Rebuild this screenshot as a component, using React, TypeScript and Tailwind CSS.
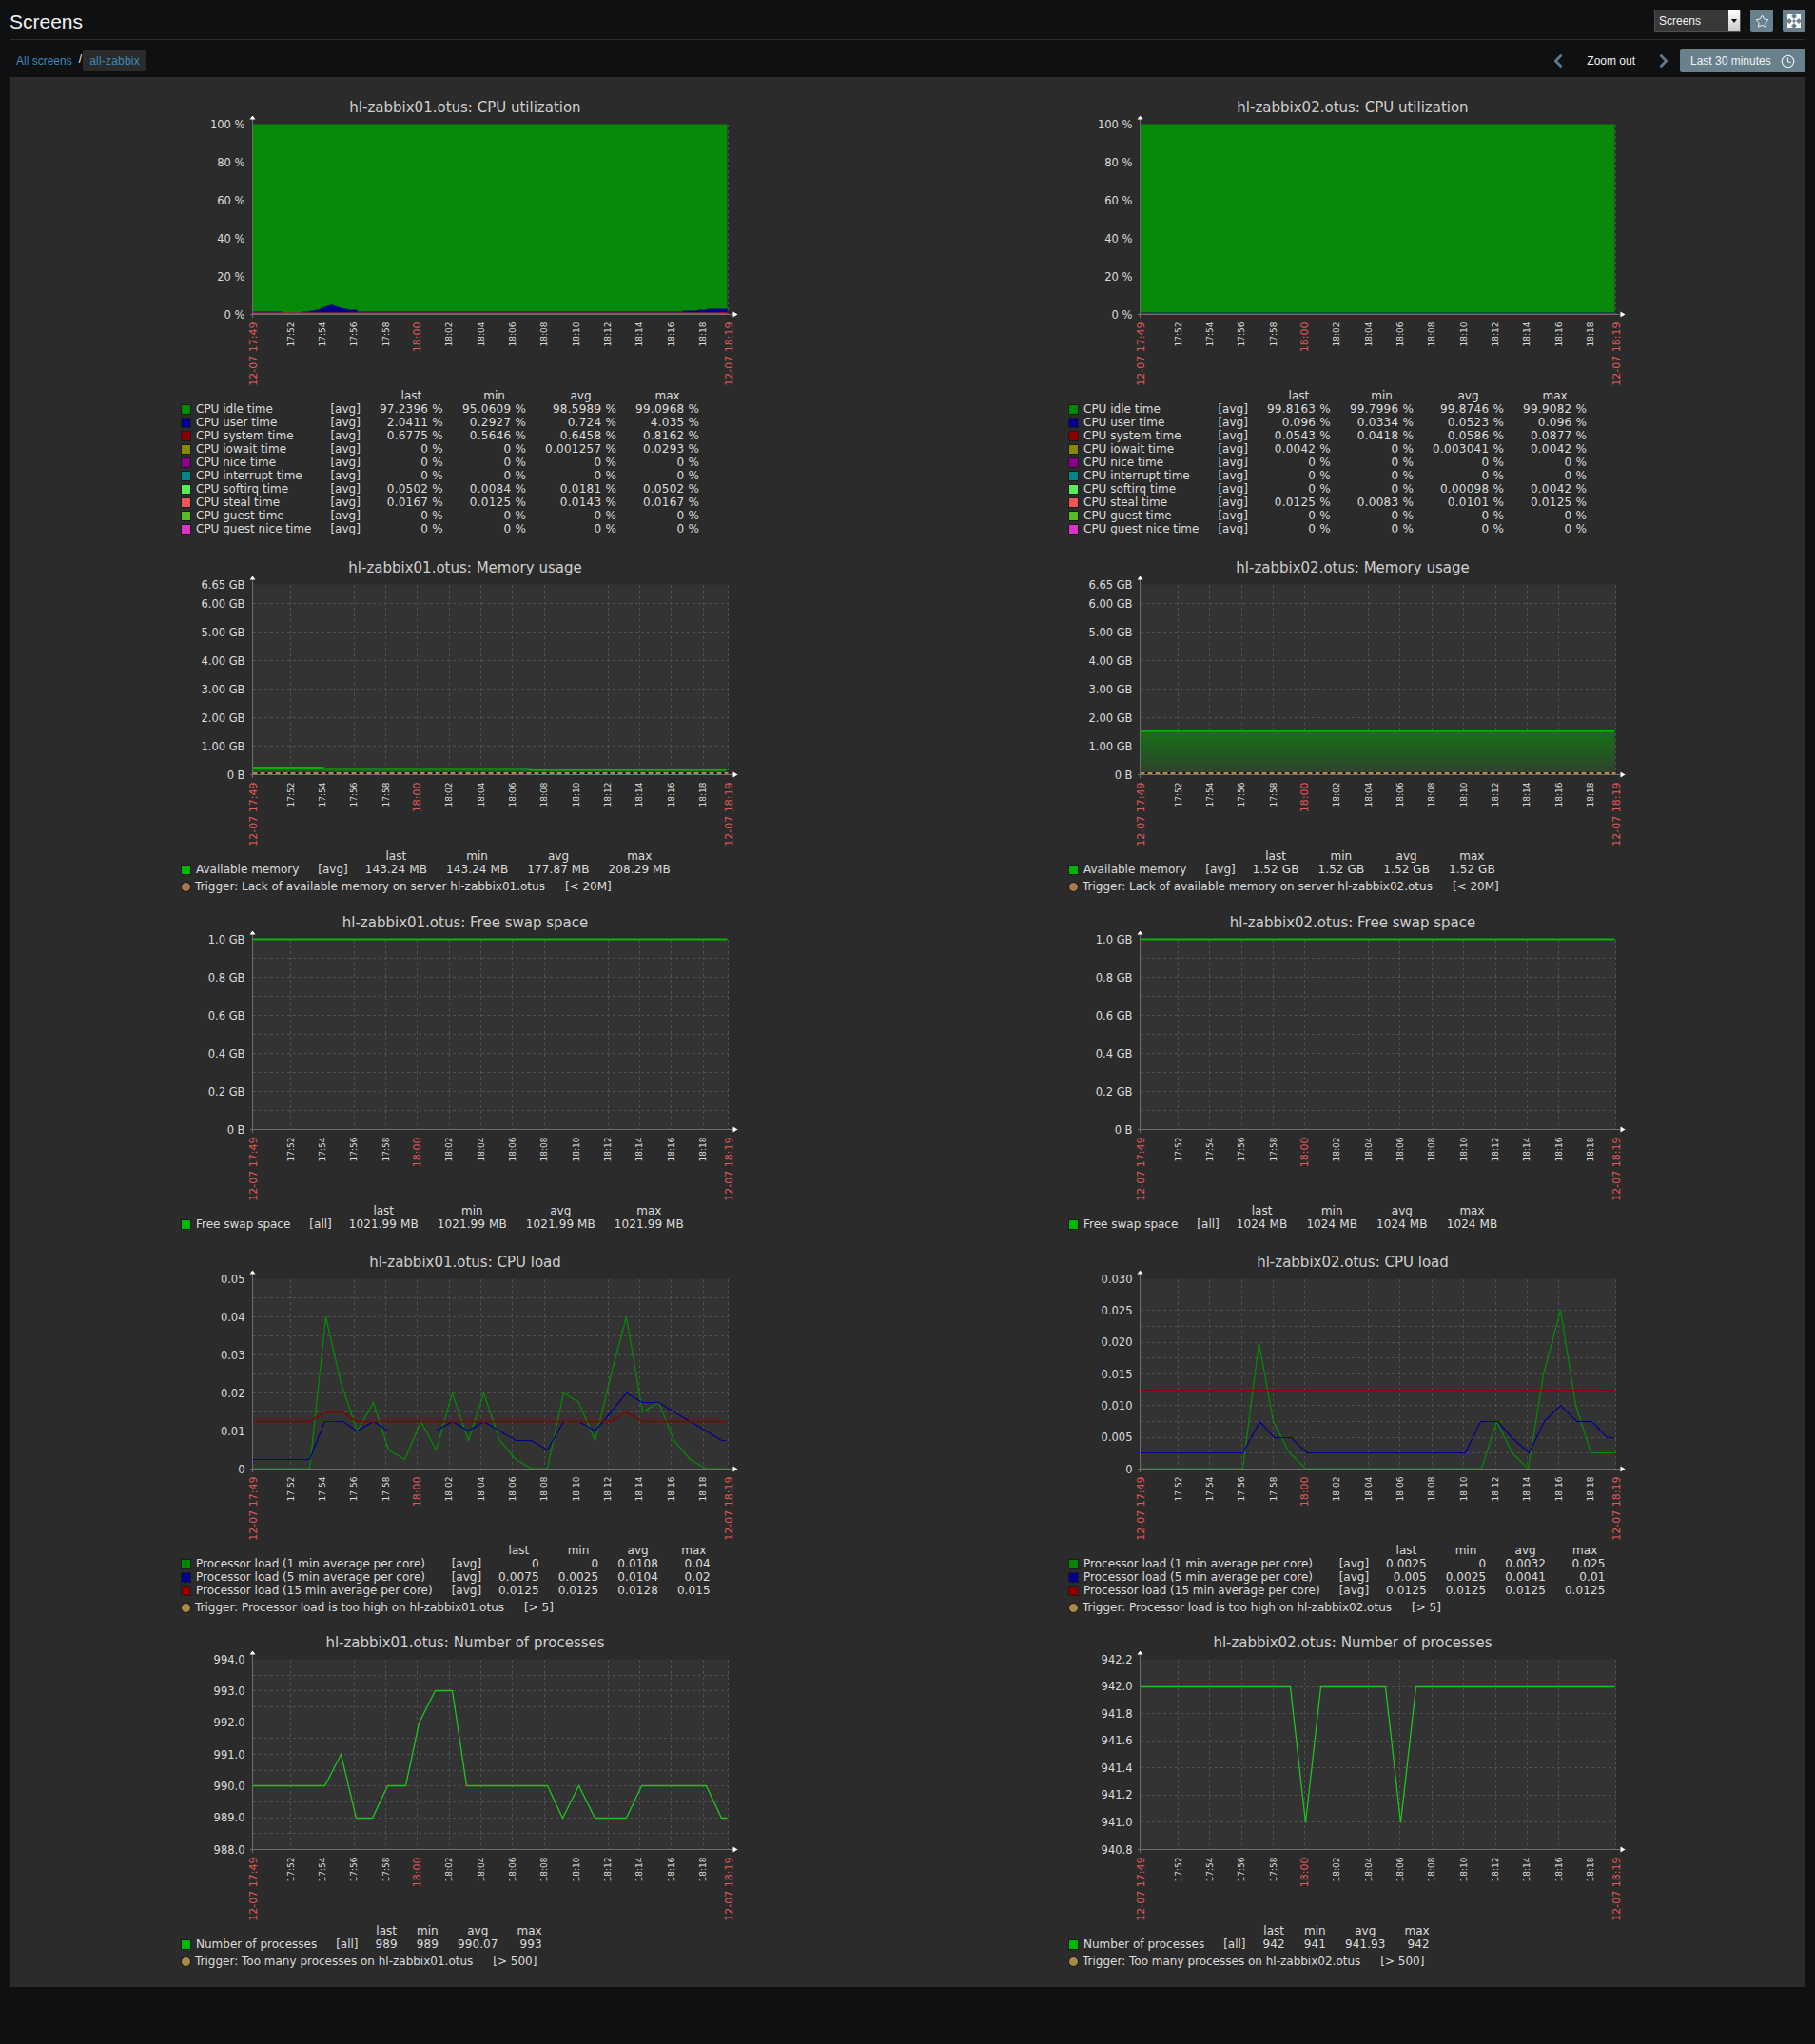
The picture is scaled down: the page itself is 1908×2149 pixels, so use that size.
import { ChevronLeft, ChevronRight, Clock, Star } from "lucide-react"

type Line = { points: string; color: string; width?: number }

type Row = { color: string; label: string; fn: string; values: string[] }

type Graph = {
  title: string
  yLabels: [string, number][]
  yGrid: number[]
  lines?: Line[]
  area?: string
  trigger?: boolean
  cpu?: "busy" | "idle"
  rows: Row[]
  triggerText?: [string, string, string]
}

const TICKS = ["17:52", "17:54", "17:56", "17:58", "18:00", "18:02", "18:04", "18:06", "18:08", "18:10", "18:12", "18:14", "18:16", "18:18"]

const tickX = (i: number) => 40 + i * 33.35

const every = (step: number, n: number) => Array.from({ length: n }, (_, i) => Math.round((i + 1) * step * 10) / 10)

const cpuRows = (rows: [string, string, string, string, string, string][]): Row[] =>
  rows.map(([color, label, a, b, c, d]) => ({ color, label, fn: "[avg]", values: [a, b, c, d] }))

const GREEN = "#00b800"

const pct = [
  ["100 %", 0],
  ["80 %", 40],
  ["60 %", 80],
  ["40 %", 120],
  ["20 %", 160],
  ["0 %", 200],
] as [string, number][]

const mem = [
  ["6.65 GB", 0],
  ["6.00 GB", 20],
  ["5.00 GB", 50],
  ["4.00 GB", 80],
  ["3.00 GB", 110],
  ["2.00 GB", 140],
  ["1.00 GB", 170],
  ["0 B", 200],
] as [string, number][]

const swap = [
  ["1.0 GB", 0],
  ["0.8 GB", 40],
  ["0.6 GB", 80],
  ["0.4 GB", 120],
  ["0.2 GB", 160],
  ["0 B", 200],
] as [string, number][]

const left: Graph[] = [
  {
    title: "hl-zabbix01.otus: CPU utilization",
    yLabels: pct,
    yGrid: [],
    cpu: "busy",
    rows: cpuRows([
      ["#008800", "CPU idle time", "97.2396 %", "95.0609 %", "98.5989 %", "99.0968 %"],
      ["#000088", "CPU user time", "2.0411 %", "0.2927 %", "0.724 %", "4.035 %"],
      ["#880000", "CPU system time", "0.6775 %", "0.5646 %", "0.6458 %", "0.8162 %"],
      ["#888800", "CPU iowait time", "0 %", "0 %", "0.001257 %", "0.0293 %"],
      ["#880088", "CPU nice time", "0 %", "0 %", "0 %", "0 %"],
      ["#008888", "CPU interrupt time", "0 %", "0 %", "0 %", "0 %"],
      ["#55ee55", "CPU softirq time", "0.0502 %", "0.0084 %", "0.0181 %", "0.0502 %"],
      ["#ee5555", "CPU steal time", "0.0167 %", "0.0125 %", "0.0143 %", "0.0167 %"],
      ["#55bb22", "CPU guest time", "0 %", "0 %", "0 %", "0 %"],
      ["#dd33cc", "CPU guest nice time", "0 %", "0 %", "0 %", "0 %"],
    ]),
  },
  {
    title: "hl-zabbix01.otus: Memory usage",
    yLabels: mem,
    yGrid: [20, 50, 80, 110, 140, 170],
    lines: [{ points: "0,192.5 74,192.5 74,194 292,194 292,195 498,195", color: GREEN, width: 2 }],
    area: "M0 193H74V194H292V195H498V199H0Z",
    trigger: true,
    rows: [{ color: GREEN, label: "Available memory", fn: "[avg]", values: ["143.24 MB", "143.24 MB", "177.87 MB", "208.29 MB"] }],
    triggerText: ["#a87850", "Trigger: Lack of available memory on server hl-zabbix01.otus", "[< 20M]"],
  },
  {
    title: "hl-zabbix01.otus: Free swap space",
    yLabels: swap,
    yGrid: every(20, 9),
    lines: [{ points: "0,0 499,0", color: GREEN, width: 2 }],
    rows: [{ color: GREEN, label: "Free swap space", fn: "[all]", values: ["1021.99 MB", "1021.99 MB", "1021.99 MB", "1021.99 MB"] }],
  },
  {
    title: "hl-zabbix01.otus: CPU load",
    yLabels: [
      ["0.05", 0],
      ["0.04", 40],
      ["0.03", 80],
      ["0.02", 120],
      ["0.01", 160],
      ["0", 200],
    ],
    yGrid: every(20, 9),
    lines: [
      {
        points:
          "0,199.5 60,199.5 77,40 93,110 110,160 127,130 143,180 160,190 177,150 193,180 210,120 227,170 243,120 260,170 277,190 293,199.5 310,199.5 327,120 343,130 360,170 377,100 393,40 410,140 427,130 443,170 460,190 477,199.5 498,199.5",
        color: "#008f00",
        width: 1.2,
      },
      {
        points:
          "0,190 60,190 76,150 95,150 110,160 127,150 143,160 193,160 210,150 227,160 243,150 260,160 277,170 293,170 310,180 327,150 343,150 360,160 377,140 393,120 410,130 427,130 443,140 477,160 493,170 498,170",
        color: "#000090",
        width: 1.2,
      },
      { points: "0,150 60,150 77,140 93,140 110,150 377,150 393,140 410,150 498,150", color: "#880000", width: 1.4 },
    ],
    rows: [
      { color: "#008800", label: "Processor load (1 min average per core)", fn: "[avg]", values: ["0", "0", "0.0108", "0.04"] },
      { color: "#000088", label: "Processor load (5 min average per core)", fn: "[avg]", values: ["0.0075", "0.0025", "0.0104", "0.02"] },
      { color: "#880000", label: "Processor load (15 min average per core)", fn: "[avg]", values: ["0.0125", "0.0125", "0.0128", "0.015"] },
    ],
    triggerText: ["#a88a48", "Trigger: Processor load is too high on hl-zabbix01.otus", "[> 5]"],
  },
  {
    title: "hl-zabbix01.otus: Number of processes",
    yLabels: [
      ["994.0", 0],
      ["993.0", 33.3],
      ["992.0", 66.7],
      ["991.0", 100],
      ["990.0", 133.3],
      ["989.0", 166.7],
      ["988.0", 200],
    ],
    yGrid: every(16.67, 11),
    lines: [
      {
        points: "0,133 76,133 93,100 109,167 126,167 142,133 161,133 175,67 192,33 210,33 225,133 310,133 326,167 343,133 360,167 393,167 409,133 477,133 493,167 499,167",
        color: "#1cc41c",
        width: 1.3,
      },
    ],
    rows: [{ color: GREEN, label: "Number of processes", fn: "[all]", values: ["989", "989", "990.07", "993"] }],
    triggerText: ["#a88a48", "Trigger: Too many processes on hl-zabbix01.otus", "[> 500]"],
  },
]

const right: Graph[] = [
  {
    title: "hl-zabbix02.otus: CPU utilization",
    yLabels: pct,
    yGrid: [],
    cpu: "idle",
    rows: cpuRows([
      ["#008800", "CPU idle time", "99.8163 %", "99.7996 %", "99.8746 %", "99.9082 %"],
      ["#000088", "CPU user time", "0.096 %", "0.0334 %", "0.0523 %", "0.096 %"],
      ["#880000", "CPU system time", "0.0543 %", "0.0418 %", "0.0586 %", "0.0877 %"],
      ["#888800", "CPU iowait time", "0.0042 %", "0 %", "0.003041 %", "0.0042 %"],
      ["#880088", "CPU nice time", "0 %", "0 %", "0 %", "0 %"],
      ["#008888", "CPU interrupt time", "0 %", "0 %", "0 %", "0 %"],
      ["#55ee55", "CPU softirq time", "0 %", "0 %", "0.00098 %", "0.0042 %"],
      ["#ee5555", "CPU steal time", "0.0125 %", "0.0083 %", "0.0101 %", "0.0125 %"],
      ["#55bb22", "CPU guest time", "0 %", "0 %", "0 %", "0 %"],
      ["#dd33cc", "CPU guest nice time", "0 %", "0 %", "0 %", "0 %"],
    ]),
  },
  {
    title: "hl-zabbix02.otus: Memory usage",
    yLabels: mem,
    yGrid: [20, 50, 80, 110, 140, 170],
    lines: [{ points: "0,154 499,154", color: GREEN, width: 2 }],
    area: "M0 154H499V199H0Z",
    trigger: true,
    rows: [{ color: GREEN, label: "Available memory", fn: "[avg]", values: ["1.52 GB", "1.52 GB", "1.52 GB", "1.52 GB"] }],
    triggerText: ["#a87850", "Trigger: Lack of available memory on server hl-zabbix02.otus", "[< 20M]"],
  },
  {
    title: "hl-zabbix02.otus: Free swap space",
    yLabels: swap,
    yGrid: every(20, 9),
    lines: [{ points: "0,0 499,0", color: GREEN, width: 2 }],
    rows: [{ color: GREEN, label: "Free swap space", fn: "[all]", values: ["1024 MB", "1024 MB", "1024 MB", "1024 MB"] }],
  },
  {
    title: "hl-zabbix02.otus: CPU load",
    yLabels: [
      ["0.030", 0],
      ["0.025", 33.3],
      ["0.020", 66.7],
      ["0.015", 100],
      ["0.010", 133.3],
      ["0.005", 166.7],
      ["0", 200],
    ],
    yGrid: every(16.67, 11),
    lines: [
      {
        points: "0,199.5 108,199.5 125,67 140,150 157,183 174,199.5 359,199.5 375,150 391,183 408,199.5 424,101 442,33 458,133 474,183 498,183",
        color: "#008f00",
        width: 1.2,
      },
      {
        points: "0,183 108,183 126,150 141,167 159,167 175,183 342,183 358,150 376,150 391,167 409,183 425,150 442,133 459,150 475,150 491,167 498,167",
        color: "#000090",
        width: 1.2,
      },
      { points: "0,117 499,117", color: "#880000" },
    ],
    rows: [
      { color: "#008800", label: "Processor load (1 min average per core)", fn: "[avg]", values: ["0.0025", "0", "0.0032", "0.025"] },
      { color: "#000088", label: "Processor load (5 min average per core)", fn: "[avg]", values: ["0.005", "0.0025", "0.0041", "0.01"] },
      { color: "#880000", label: "Processor load (15 min average per core)", fn: "[avg]", values: ["0.0125", "0.0125", "0.0125", "0.0125"] },
    ],
    triggerText: ["#a88a48", "Trigger: Processor load is too high on hl-zabbix02.otus", "[> 5]"],
  },
  {
    title: "hl-zabbix02.otus: Number of processes",
    yLabels: [
      ["942.2", 0],
      ["942.0", 28.6],
      ["941.8", 57.1],
      ["941.6", 85.7],
      ["941.4", 114.3],
      ["941.2", 142.9],
      ["941.0", 171.4],
      ["940.8", 200],
    ],
    yGrid: [28.6, 57.1, 85.7, 114.3, 142.9, 171.4],
    lines: [{ points: "0,29 158,29 174,172 190,29 258,29 274,172 290,29 499,29", color: "#1cc41c", width: 1.3 }],
    rows: [{ color: GREEN, label: "Number of processes", fn: "[all]", values: ["942", "941", "941.93", "942"] }],
    triggerText: ["#a88a48", "Trigger: Too many processes on hl-zabbix02.otus", "[> 500]"],
  },
]

// stacked cpu area, x/height pairs of the blue layer on the first host
const BUSY =
  "M0 200V197H31V198H51V197H60V196H66V195H70V194H72V193H75V192H78V191H81V190H85V191H88V192H91V193H95V194H100V195H110V197H452V196H468V195H478V194H499V200Z"

function Plot({ graph, id }: { graph: Graph; id: string }) {
  const dashed = { stroke: "#505050", strokeDasharray: "3 3" }
  return (
    <svg width="612" height="287" className="block" fontFamily="'DejaVu Sans', sans-serif">
      <defs>
        <linearGradient id={id} x1="0" y1="0" x2="0" y2="1">
          <stop offset="0" stopColor="#167216" />
          <stop offset="1" stopColor="#2e402e" />
        </linearGradient>
      </defs>
      <g transform="translate(82.5 8.5)">
        {graph.cpu ? (
          <rect x="0" y="0" width="499" height="200" fill="#078a07" />
        ) : (
          <rect x="0" y="0" width="500" height="200" fill="#333333" />
        )}
        <g shapeRendering="crispEdges" strokeWidth="1">
          {graph.yGrid.map((y) => (
            <line key={y} x1="0" x2="500" y1={y} y2={y} {...dashed} />
          ))}
          {TICKS.map((_, i) => (
            <line key={i} x1={tickX(i)} x2={tickX(i)} y1="0" y2="200" {...dashed} stroke={graph.cpu ? "#0f8c0f" : "#505050"} />
          ))}
          <line x1="500" x2="500" y1="0" y2="200" {...dashed} />
        </g>
        {graph.cpu === "busy" && (
          <>
            <path d={BUSY} fill="#000088" />
            <rect x="0" y="198" width="499" height="2" fill="#e6283c" />
          </>
        )}
        {graph.cpu === "idle" && (
          <>
            <rect x="0" y="198" width="499" height="1" fill="#000088" />
            <rect x="0" y="199" width="499" height="1" fill="#cc2233" />
          </>
        )}
        {graph.area && <path d={graph.area} fill={`url(#${id})`} />}
        {graph.lines?.map((l) => (
          <polyline key={l.color} points={l.points} fill="none" stroke={l.color} strokeWidth={l.width ?? 1} />
        ))}
        {graph.trigger && (
          <>
            <line x1="0" x2="500" y1="198.5" y2="198.5" stroke="#0c0c0c" strokeWidth="2" />
            <line x1="0" x2="500" y1="198.5" y2="198.5" stroke="#b8864a" strokeWidth="2" strokeDasharray="5 3" />
          </>
        )}
        <g shapeRendering="crispEdges" stroke="#6e6e6e">
          <line x1="0" x2="0" y1="-7" y2="203" />
          <line x1="-3" x2="505" y1="200" y2="200" />
        </g>
        <path d="M-3 -5L0 -9L3 -5Z" fill="#ffffff" />
        <path d="M505 197L510 200L505 203Z" fill="#ffffff" />
        {graph.yLabels.map(([label, y]) => (
          <text key={label} x="-8" y={y + 4} textAnchor="end" fontSize="11.5" fill="#dcdcdc">
            {label}
          </text>
        ))}
        {TICKS.map((t, i) =>
          t === "18:00" ? (
            <text key={t} transform={`translate(${tickX(i) + 3} 208) rotate(-90)`} textAnchor="end" fontSize="11" fill="#e15a5a">
              {t}
            </text>
          ) : (
            <text key={t} transform={`translate(${tickX(i) + 3} 208) rotate(-90)`} textAnchor="end" fontSize="9" fill="#dcdcdc">
              {t}
            </text>
          ),
        )}
        <text transform="translate(4 208) rotate(-90)" textAnchor="end" fontSize="11" fill="#e15a5a">
          12-07 17:49
        </text>
        <text transform="translate(504 208) rotate(-90)" textAnchor="end" fontSize="11" fill="#e15a5a">
          12-07 18:19
        </text>
      </g>
    </svg>
  )
}

function Legend({ graph }: { graph: Graph }) {
  const percent = graph.rows[0].values[0].endsWith("%")
  return (
    <div className="pl-[7px] font-['DejaVu_Sans',sans-serif] text-[12px] leading-[14px] text-[#dcdcdc]">
      <div className="grid w-fit grid-cols-[repeat(6,auto)] gap-x-5">
        <span />
        <span />
        {["last", "min", "avg", "max"].map((h) => (
          <span key={h} className="text-center">
            {h}
          </span>
        ))}
        {graph.rows.map((row) => (
          <div key={row.label} className="contents">
            <div className="flex items-center gap-[5px]">
              <span className="size-[11px] border border-[#1c1c1c]" style={{ backgroundColor: row.color }} />
              <span className="whitespace-pre">{row.label}</span>
            </div>
            <span className={percent ? "" : "-mr-[2px]"}>{row.fn}</span>
            {row.values.map((v, i) => (
              <span key={i} className={percent ? "text-right tracking-[0.25px] whitespace-pre" : "text-right tracking-[0.1px] whitespace-pre"}>
                {v}
              </span>
            ))}
          </div>
        ))}
      </div>
      {graph.triggerText && (
        <div className="flex h-[22px] items-center gap-[21px]">
          <div className="flex items-center gap-[4px]">
            <span className="size-[11px] rounded-full border border-[#111111]" style={{ backgroundColor: graph.triggerText[0] }} />
            <span>{graph.triggerText[1]}</span>
          </div>
          <span>{graph.triggerText[2]}</span>
        </div>
      )}
    </div>
  )
}

function GraphBlock({ graph, id }: { graph: Graph; id: string }) {
  return (
    <div className="w-[612px]">
      <div className="h-[18px] text-center font-['DejaVu_Sans',sans-serif] text-[15px] leading-[18px] whitespace-nowrap text-[#cfcfcf]">{graph.title}</div>
      <Plot graph={graph} id={id} />
      <Legend graph={graph} />
    </div>
  )
}

function FullscreenIcon() {
  const arrow = "M1 1h6L5 3l3 3-2 2-3-3-2 2z"
  return (
    <svg width="16" height="16" viewBox="0 0 16 16" fill="#ffffff">
      <path d={arrow} />
      <path d={arrow} transform="matrix(-1 0 0 1 16 0)" />
      <path d={arrow} transform="matrix(1 0 0 -1 0 16)" />
      <path d={arrow} transform="matrix(-1 0 0 -1 16 16)" />
    </svg>
  )
}

export default function App() {
  return (
    <div className="min-h-[2149px] bg-[#0e1012] font-['Liberation_Sans',Arial,sans-serif] text-[12px] text-[#f2f2f2]">
      <header className="mx-[10px] flex h-[42px] items-center justify-between border-b border-[#2b2b2b] pt-[3px]">
        <h1 className="text-[21px] leading-none font-normal">Screens</h1>
        <div className="flex items-center">
          <div className="flex h-[24px] w-[91px] items-center justify-between border border-[#4f4f4f] bg-[#383838] pl-[4px]">
            <span className="text-[#f2f2f2]">Screens</span>
            <span className="flex h-full w-[12px] items-center justify-center bg-gradient-to-b from-white to-[#c8c8c8]">
              <span className="border-x-[3px] border-t-[4px] border-x-transparent border-t-black" />
            </span>
          </div>
          <button className="ml-[10px] flex size-[24px] items-center justify-center rounded-[2px] bg-[#69808d]">
            <Star size={15} strokeWidth={1.5} color="#ffffff" />
          </button>
          <button className="ml-[10px] flex size-[24px] items-center justify-center rounded-[2px] bg-[#69808d]">
            <FullscreenIcon />
          </button>
        </div>
      </header>

      <nav className="mx-[10px] flex h-[39px] items-center justify-between pt-[5px]">
        <div className="flex items-center text-[#3d8ab5]">
          <span className="ml-[7px]">All screens</span>
          <span className="ml-[7px] -translate-y-[2px] text-[#f2f2f2]">/</span>
          <span className="ml-[1px] flex h-[22px] w-[67px] items-center justify-center rounded-[2px] bg-[#2b2b2b] tracking-[0.2px]">all-zabbix</span>
        </div>
        <div className="flex items-center">
          <ChevronLeft size={22} strokeWidth={3} color="#5f7a8c" />
          <span className="mx-[19px]">Zoom out</span>
          <ChevronRight size={22} strokeWidth={3} color="#5f7a8c" />
          <button className="ml-[6px] flex h-[24px] w-[132px] items-center gap-[10px] rounded-[2px] bg-[#69808d] pl-[11px]">
            Last 30 minutes
            <Clock size={15} strokeWidth={1.8} />
          </button>
        </div>
      </nav>

      <main className="mx-[10px] grid grid-cols-[933px_612px] grid-rows-[484px_373px_357px_400px_371px] bg-[#2b2b2b] pt-[23px] pl-[173px]">
        {left.map((g, i) => (
          <div key={g.title} className="contents">
            <GraphBlock graph={g} id={`l${i}`} />
            <GraphBlock graph={right[i]} id={`r${i}`} />
          </div>
        ))}
      </main>
    </div>
  )
}
